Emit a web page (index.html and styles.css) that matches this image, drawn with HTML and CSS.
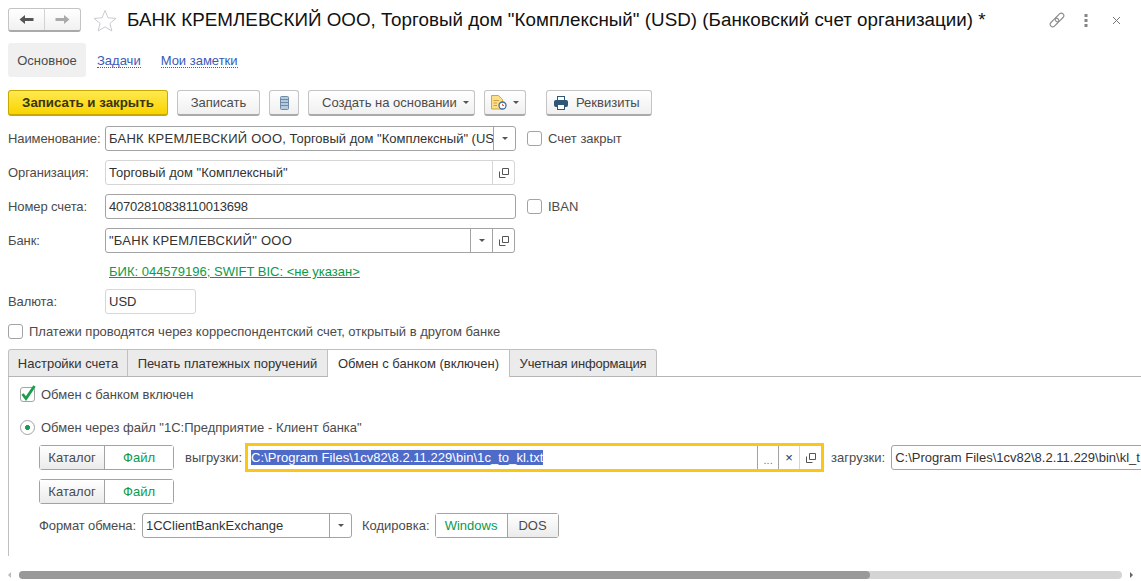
FILE: index.html
```html
<!DOCTYPE html>
<html lang="ru">
<head>
    <meta charset="UTF-8">
    <title>БАНК КРЕМЛЕВСКИЙ ООО</title>
    <link rel="stylesheet" href="styles.css">
</head>
<body>
    <div class="page">
        <header class="title-row">
            <div class="nav-buttons">
                <span class="nav-btn">
                    <svg width="15" height="11" viewBox="0 0 15 11"><path d="M0.5 5.5 L6 1 V4 H14.5 V7 H6 V10 Z" fill="#555"/></svg>
                </span>
                <span class="nav-btn">
                    <svg width="15" height="11" viewBox="0 0 15 11"><path d="M14.5 5.5 L9 1 V4 H0.5 V7 H9 V10 Z" fill="#aaa"/></svg>
                </span>
            </div>
            <svg class="star" width="24" height="23" viewBox="0 0 24 23"><path d="M12 1.5 L15 8.8 L23 9.4 L16.9 14.4 L18.9 22 L12 17.9 L5.1 22 L7.1 14.4 L1 9.4 L9 8.8 Z" fill="#fff" stroke="#c8ccd0"/></svg>
            <h1 class="title">БАНК КРЕМЛЕВСКИЙ ООО, Торговый дом "Комплексный" (USD) (Банковский счет организации) *</h1>
            <div class="window-icons">
                <svg width="16" height="16" viewBox="0 0 16 16" fill="none" stroke="#8a8a8a" stroke-width="1.1"><rect x="8" y="0.5" width="5" height="10" rx="2.5" transform="rotate(45 10.5 5.5)"/><rect x="3" y="5.5" width="5" height="10" rx="2.5" transform="rotate(45 5.5 10.5)"/></svg>
                <svg width="4" height="14" viewBox="0 0 4 14" fill="#858585"><rect x="0.5" y="1" width="3" height="3"/><rect x="0.5" y="6" width="3" height="3"/><rect x="0.5" y="11" width="3" height="3"/></svg>
                <svg class="close-icon" width="9" height="9" viewBox="0 0 9 9" stroke="#777" stroke-width="1"><path d="M1 1 L8 8 M8 1 L1 8"/></svg>
            </div>
        </header>

        <nav class="sections">
            <span class="section active">Основное</span>
            <a class="section-link">Задачи</a>
            <a class="section-link">Мои заметки</a>
        </nav>

        <div class="toolbar">
            <button class="btn btn-primary">Записать и закрыть</button>
            <button class="btn btn-save">Записать</button>
            <button class="btn btn-icon">
                <svg width="9" height="14" viewBox="0 0 9 14"><rect x="0.5" y="0.5" width="8" height="13" rx="1" fill="#b4cade" stroke="#6f8ba6"/><path d="M1 3.5 H8 M1 6.5 H8 M1 9.5 H8" stroke="#6f8ba6"/></svg>
            </button>
            <button class="btn btn-create">Создать на основании <i class="caret"></i></button>
            <button class="btn btn-doc">
                <svg width="16" height="15" viewBox="0 0 16 15"><path d="M0.5 0.5 H7.5 L11.5 4.5 V14 H0.5 Z" fill="#fbdf8a" stroke="#d3a63a"/><path d="M2.5 5.5 H8 M2.5 8 H6 M2.5 10.5 H6" stroke="#c9a13f"/><circle cx="11.5" cy="10.5" r="3.5" fill="#fff" stroke="#3f6c9e" stroke-width="1.3"/><path d="M11.5 8.8 V10.5 H13" stroke="#d95b4a" fill="none"/></svg>
                <i class="caret"></i>
            </button>
            <button class="btn btn-print">
                <svg width="14" height="14" viewBox="0 0 14 14"><rect x="3.5" y="0.5" width="7" height="4" fill="#fff" stroke="#2f5578"/><rect x="0.5" y="4.5" width="13" height="6" rx="1" fill="#2f5578" stroke="#2f5578"/><rect x="3.5" y="8.5" width="7" height="5" fill="#fff" stroke="#2f5578"/></svg>
                Реквизиты
            </button>
        </div>

        <div class="form">
            <div class="row">
                <label class="label">Наименование:</label>
                <div class="field strong w-name">
                    <span class="value"><span class="caps">БАНК КРЕМЛЕВСКИЙ ООО</span>, Торговый дом "Комплексный" (US</span>
                    <span class="part part-drop"><i class="caret"></i></span>
                </div>
                <span class="check"></span>
                <span class="check-text">Счет закрыт</span>
            </div>
            <div class="row">
                <label class="label">Организация:</label>
                <div class="field w-org">
                    <span class="value">Торговый дом "Комплексный"</span>
                    <span class="part part-open">
                        <svg class="open-icon" width="10" height="10" viewBox="0 0 10 10" fill="none" stroke="#555"><path d="M3.5 0.5 H9.5 V6.5 H3.5 Z"/><path d="M0.5 3.5 V9.5 H6.5"/></svg>
                    </span>
                </div>
            </div>
            <div class="row">
                <label class="label">Номер счета:</label>
                <div class="field strong w-name">
                    <span class="value digits">40702810838110013698</span>
                </div>
                <span class="check"></span>
                <span class="check-text">IBAN</span>
            </div>
            <div class="row">
                <label class="label">Банк:</label>
                <div class="field strong w-org">
                    <span class="value"><span class="caps">"БАНК КРЕМЛЕВСКИЙ" ООО</span></span>
                    <span class="part part-drop"><i class="caret"></i></span>
                    <span class="part part-open">
                        <svg class="open-icon" width="10" height="10" viewBox="0 0 10 10" fill="none" stroke="#555"><path d="M3.5 0.5 H9.5 V6.5 H3.5 Z"/><path d="M0.5 3.5 V9.5 H6.5"/></svg>
                    </span>
                </div>
            </div>
            <a class="bank-link">БИК: 044579196; SWIFT BIC: &lt;не указан&gt;</a>
            <div class="row row-currency">
                <label class="label">Валюта:</label>
                <div class="field w-cur"><span class="value">USD</span></div>
            </div>
            <div class="row row-corr">
                <span class="check"></span>
                <span class="check-text">Платежи проводятся через корреспондентский счет, открытый в другом банке</span>
            </div>
        </div>

        <div class="tabs">
            <span class="tab tab-first">Настройки счета</span>
            <span class="tab tab-print">Печать платежных поручений</span>
            <span class="tab current">Обмен с банком (включен)</span>
            <span class="tab tab-info">Учетная информация</span>
        </div>

        <section class="panel">
            <div class="panel-line">
                <span class="check checked">
                    <svg width="15" height="15" viewBox="0 0 15 15"><path d="M2.5 7 L6 11.5 L14.5 -1" fill="none" stroke="#1b9e4b" stroke-width="2.8"/></svg>
                </span>
                <span class="check-text">Обмен с банком включен</span>
            </div>
            <div class="panel-line line-radio">
                <span class="radio"></span>
                <span class="check-text">Обмен через файл "1С:Предприятие - Клиент банка"</span>
            </div>
            <div class="file-row">
                <div class="switch w-switch">
                    <span class="switch-off sw-catalog">Каталог</span>
                    <span class="switch-on">Файл</span>
                </div>
                <label class="label-inline">выгрузки:</label>
                <div class="field focused">
                    <span class="value"><span class="selected">C:\Program Files\1cv82\8.2.11.229\bin\1c_to_kl.txt</span></span>
                    <span class="part part-dots">...</span>
                    <span class="part part-clear">×</span>
                    <span class="part part-open">
                        <svg class="open-icon" width="10" height="10" viewBox="0 0 10 10" fill="none" stroke="#555"><path d="M3.5 0.5 H9.5 V6.5 H3.5 Z"/><path d="M0.5 3.5 V9.5 H6.5"/></svg>
                    </span>
                </div>
                <label class="label-inline label-load">загрузки:</label>
                <div class="field strong w-load">
                    <span class="value">C:\Program Files\1cv82\8.2.11.229\bin\kl_t</span>
                </div>
            </div>
            <div class="switch w-switch second">
                <span class="switch-off sw-catalog">Каталог</span>
                <span class="switch-on">Файл</span>
            </div>
            <div class="format-row">
                <label class="label-inline label-format">Формат обмена:</label>
                <div class="field strong w-format">
                    <span class="value">1CClientBankExchange</span>
                    <span class="part part-drop"><i class="caret"></i></span>
                </div>
                <label class="label-inline label-enc">Кодировка:</label>
                <div class="switch">
                    <span class="switch-on sw-win">Windows</span>
                    <span class="switch-off sw-dos">DOS</span>
                </div>
            </div>
        </section>
    </div>

    <div class="scrollbar">
        <i class="arrow-left"></i>
        <div class="track"><div class="thumb"></div></div>
        <i class="arrow-right"></i>
    </div>
</body>
</html>
```

FILE: styles.css
```css
html, body {
    margin: 0;
    height: 100%;
}

body {
    width: 1141px;
    height: 581px;
    overflow: hidden;
    display: flex;
    flex-direction: column;
    background: #fff;
    color: #4b4b4b;
    font-family: "Liberation Sans", Arial, sans-serif;
    font-size: 13px;
}

.page {
    flex: 1;
    min-height: 0;
    overflow: hidden;
    padding: 8px 0 0 8px;
}

/* Title */
.title-row {
    display: flex;
    align-items: center;
    height: 24px;
}

.nav-buttons {
    display: flex;
    width: 73px;
    height: 24px;
    box-sizing: border-box;
    border: 1px solid #c4c4c4;
    border-bottom: 2px solid #aaa;
    border-radius: 3px;
    background: linear-gradient(#fff, #f1f1f1);
}

.nav-btn {
    flex: 1;
    display: flex;
    align-items: center;
    justify-content: center;
}

.nav-btn + .nav-btn {
    border-left: 1px solid #d2d2d2;
}

.star {
    margin-left: 12px;
    flex: none;
}

.title {
    margin: 0 0 0 10px;
    font-size: 18.8px;
    letter-spacing: 0.023px;
    font-weight: normal;
    color: #111;
    white-space: nowrap;
}

.window-icons {
    display: flex;
    align-items: center;
    gap: 19px;
    margin-left: 63px;
}

.close-icon {
    margin-left: 5px;
}

/* Sections */
.sections {
    display: flex;
    align-items: center;
    margin-top: 11px;
    height: 34px;
}

.section {
    display: flex;
    align-items: center;
    justify-content: center;
    width: 78px;
    height: 34px;
    background: #f0f0f0;
    border-radius: 3px;
}

.section-link {
    margin-left: 11px;
    margin-right: 9px;
    padding-top: 2px;
    color: #3a5ab8;
    border-bottom: 1px dotted #3a5ab8;
    line-height: 13px;
}

/* Toolbar */
.toolbar {
    display: flex;
    margin-top: 13px;
    height: 26px;
    gap: 9px;
}

.btn {
    display: flex;
    align-items: center;
    justify-content: center;
    gap: 6px;
    padding: 0;
    height: 26px;
    box-sizing: border-box;
    border: 1px solid #c4c4c4;
    border-bottom: 2px solid #aaa;
    border-radius: 3px;
    background: linear-gradient(#fff, #f0f0f0);
    color: #4b4b4b;
    font: inherit;
}

.btn-primary {
    width: 160px;
    background: linear-gradient(#ffe94f, #f9d400);
    border-color: #c9a800;
    font-weight: bold;
    font-size: 13.3px;
    color: #3a3410;
}

.btn-save { width: 83px; }
.btn-icon { width: 30px; }
.btn-doc { width: 42px; }

.btn-create {
    width: 167px;
    justify-content: flex-start;
    padding-left: 13px;
}

.btn-print {
    width: 106px;
    margin-left: 11px;
    justify-content: flex-start;
    padding-left: 7px;
    gap: 8px;
}

.caret {
    display: inline-block;
    width: 0;
    height: 0;
    border-left: 3px solid transparent;
    border-right: 3px solid transparent;
    border-top: 3px solid #555;
}

/* Form */
.form {
    margin-top: 10px;
}

.row {
    display: flex;
    align-items: center;
    height: 25px;
    margin-bottom: 9px;
}

.label {
    width: 97px;
    flex: none;
    letter-spacing: -0.1px;
}

.field {
    display: flex;
    align-items: stretch;
    flex: none;
    height: 25px;
    box-sizing: border-box;
    border: 1px solid #d6d6d6;
    border-radius: 3px;
    background: #fff;
    color: #333;
}

.field.strong {
    border-color: #a3a3a3;
}

.value {
    flex: 1;
    min-width: 0;
    padding-left: 3px;
    line-height: 23px;
    white-space: nowrap;
    overflow: hidden;
}

.caps {
    letter-spacing: 0.25px;
}

.digits {
    letter-spacing: -0.25px;
}

.part {
    flex: none;
    display: flex;
    align-items: center;
    justify-content: center;
    border-left: 1px solid #a3a3a3;
}

.part-drop { width: 21px; }
.part-open { width: 21px; }

.field:not(.strong) .part-open {
    border-left-color: #d6d6d6;
}

.w-name { width: 411px; }
.w-org { width: 410px; }
.w-cur { width: 91px; }

.check {
    display: flex;
    align-items: center;
    justify-content: center;
    flex: none;
    width: 15px;
    height: 15px;
    box-sizing: border-box;
    border: 1px solid #a3a3a3;
    border-radius: 3px;
    background: #fff;
}

.row > .check {
    margin-left: 11px;
}

.check-text {
    margin-left: 6px;
    white-space: nowrap;
}

.bank-link {
    display: block;
    margin: 12px 0 0 101px;
    height: 15px;
    line-height: 14px;
    color: #0b9a4b;
    text-decoration: underline;
}

.row-currency {
    margin-top: 9px;
}

.row-corr {
    height: 16px;
    margin-top: 9px;
    margin-bottom: 0;
}

.row-corr > .check {
    margin-left: 0;
}

/* Tabs */
.tabs {
    display: flex;
    margin-top: 10px;
    height: 28px;
    box-sizing: border-box;
    border-bottom: 1px solid #b5b5b5;
}

.tab {
    display: flex;
    align-items: center;
    justify-content: center;
    flex: none;
    height: 27px;
    box-sizing: border-box;
    border: 1px solid #c0c0c0;
    border-left: 0;
    border-bottom: 0;
    background: #ebebeb;
    color: #333;
    white-space: nowrap;
}

.tab-first {
    width: 120px;
    border-left: 1px solid #c0c0c0;
    border-top-left-radius: 3px;
}

.tab-print {
    width: 200px;
}

.tab-info {
    width: 147px;
    letter-spacing: -0.2px;
    border-top-right-radius: 3px;
}

.tab.current {
    width: 182px;
    height: 28px;
    background: #fff;
}

/* Panel */
.panel {
    height: 179px;
    border-left: 1px solid #c0c0c0;
    padding-left: 11px;
    box-sizing: border-box;
}

.panel-line {
    display: flex;
    align-items: center;
    height: 16px;
    padding-top: 9px;
}

.check.checked {
    overflow: visible;
}

.checked svg {
    flex: none;
    overflow: visible;
}

.line-radio {
    padding-top: 17px;
}

.radio {
    display: block;
    flex: none;
    width: 15px;
    height: 15px;
    box-sizing: border-box;
    border: 1px solid #a3a3a3;
    border-radius: 50%;
    background: radial-gradient(circle, #1b9e4b 0 2.2px, #fff 2.8px);
}

.file-row {
    display: flex;
    align-items: center;
    height: 29px;
    margin: 8px 0 0 19px;
    white-space: nowrap;
}

.switch {
    display: flex;
    flex: none;
    height: 25px;
    box-sizing: border-box;
    border: 1px solid #a3a3a3;
    border-radius: 3px;
}

.switch span {
    display: flex;
    align-items: center;
    justify-content: center;
}

.switch-off {
    background: linear-gradient(#fff, #ebebeb);
    color: #4b4b4b;
}

.switch-on {
    background: #fff;
    color: #0b9a4b;
}

.w-switch { width: 135px; }

.sw-catalog {
    width: 64px;
    border-right: 1px solid #a3a3a3;
}

.w-switch .switch-on { flex: 1; }

.second {
    margin: 7px 0 0 19px;
}

.label-inline {
    flex: none;
    white-space: nowrap;
}

.file-row .label-inline {
    margin-left: 11px;
    margin-right: 3px;
}

.field.focused {
    flex: none;
    width: 579px;
    height: 29px;
    border: 3px solid #fbc716;
    border-radius: 0;
}

.focused .value {
    padding-left: 3px;
    line-height: 23px;
}

.selected {
    background: #4f6bc9;
    color: #fff;
    letter-spacing: 0.04px;
}

.part-dots {
    width: 21px;
    align-items: flex-end;
    padding-bottom: 3px;
    box-sizing: border-box;
    color: #777;
    font-size: 11px;
}

.part-clear { width: 20px; }
.focused .part-open { width: 21px; }

.file-row .label-load {
    margin-left: 7px;
    margin-right: 6px;
}

.w-load {
    width: 300px;
}

.format-row {
    display: flex;
    align-items: center;
    height: 25px;
    margin: 9px 0 0 19px;
}

.label-format {
    width: 103px;
    letter-spacing: -0.1px;
}

.w-format {
    width: 210px;
}

.label-enc {
    margin-left: 10px;
    margin-right: 5px;
}

.sw-win {
    width: 71px;
    border-right: 1px solid #a3a3a3;
}

.sw-dos {
    width: 50px;
}

/* Scrollbar */
.scrollbar {
    flex: none;
    display: flex;
    align-items: center;
    height: 10px;
    margin-bottom: 1px;
    padding: 0 8px 0 8px;
}

.track {
    flex: 1;
    height: 8px;
    margin: 0 8px 0 8px;
    background: #d4d4d4;
    border-radius: 4px;
}

.thumb {
    width: 851px;
    height: 8px;
    background: #999;
    border-radius: 4px;
}

.arrow-left,
.arrow-right {
    width: 0;
    height: 0;
    border-top: 3px solid transparent;
    border-bottom: 3px solid transparent;
}

.arrow-left { border-right: 3px solid #bbb; }
.arrow-right { border-left: 3px solid #666; }
```
